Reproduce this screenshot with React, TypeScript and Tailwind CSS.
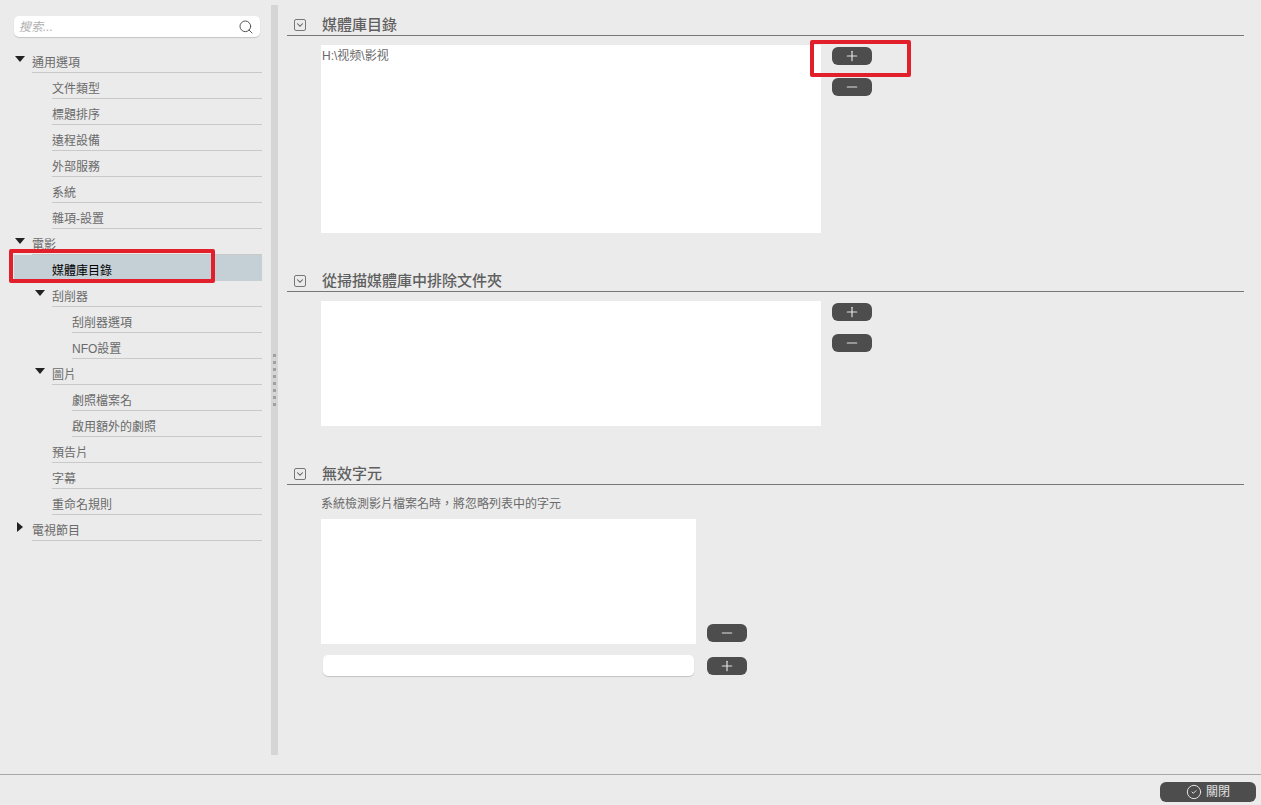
import { ChevronDown, CircleCheck, Minus, Plus, Search } from "lucide-react";
import type { ReactNode } from "react";

interface TreeItem {
  label: string;
  level: number;
  caret?: "down" | "right";
  selected?: boolean;
}

const tree: TreeItem[] = [
  { label: "通用選項", level: 0, caret: "down" },
  { label: "文件類型", level: 1 },
  { label: "標題排序", level: 1 },
  { label: "遠程設備", level: 1 },
  { label: "外部服務", level: 1 },
  { label: "系統", level: 1 },
  { label: "雜項-設置", level: 1 },
  { label: "電影", level: 0, caret: "down" },
  { label: "媒體庫目錄", level: 1, selected: true },
  { label: "刮削器", level: 1, caret: "down" },
  { label: "刮削器選項", level: 2 },
  { label: "NFO設置", level: 2 },
  { label: "圖片", level: 1, caret: "down" },
  { label: "劇照檔案名", level: 2 },
  { label: "啟用額外的劇照", level: 2 },
  { label: "預告片", level: 1 },
  { label: "字幕", level: 1 },
  { label: "重命名規則", level: 1 },
  { label: "電視節目", level: 0, caret: "right" },
];

const indent = ["pl-0", "pl-[20px]", "pl-[40px]"];

function TreeRow({ item }: { item: TreeItem }) {
  return (
    <div className={`flex h-[26px] ${indent[item.level]} ${item.selected ? "bg-[#c5cfd6]" : ""}`}>
      <div className="flex w-[18px] shrink-0 items-center pb-[2px]">
        {item.caret === "down" && (
          <div className="ml-[1px] h-0 w-0 border-x-[5px] border-t-[6px] border-x-transparent border-t-[#222]" />
        )}
        {item.caret === "right" && (
          <div className="ml-[3px] h-0 w-0 border-y-[5px] border-l-[6px] border-y-transparent border-l-[#222]" />
        )}
      </div>
      <div
        className={`flex-1 border-b text-[12px] leading-[32px] ${
          item.selected ? "border-transparent text-black" : "border-[#c9c9c9] text-[#6a6a6a]"
        }`}
      >
        {item.label}
      </div>
    </div>
  );
}

function IconButton({ kind }: { kind: "plus" | "minus" }) {
  return (
    <button className="flex h-[18px] w-[40px] items-center justify-center rounded-[6px] bg-[#4d4d4d] text-[#e2e2e2]">
      {kind === "plus" ? <Plus size={16} strokeWidth={1.75} /> : <Minus size={16} strokeWidth={1.75} />}
    </button>
  );
}

function SectionHeader({ title }: { title: string }) {
  return (
    <div className="flex h-[21px] items-center border-b border-[#777777] pl-[7px]">
      <div className="flex h-[12px] w-[12px] items-center justify-center rounded-[2px] border border-[#777777] text-[#555555]">
        <ChevronDown size={10} strokeWidth={2.5} />
      </div>
      <h2 className="mb-[1px] ml-[16px] text-[15px] font-medium leading-none text-[#5f5f5f]">{title}</h2>
    </div>
  );
}

function ListWithButtons({ heightClass, children }: { heightClass: string; children?: ReactNode }) {
  return (
    <div className="mt-[9px] flex pl-[34px]">
      <div className={`w-[500px] bg-white px-[1px] text-[12px] leading-[22px] text-[#6a6a6a] ${heightClass}`}>
        {children}
      </div>
      <div className="ml-[11px] mt-[2px] flex flex-col gap-[13px]">
        <IconButton kind="plus" />
        <IconButton kind="minus" />
      </div>
    </div>
  );
}

export default function App() {
  return (
    <div className='flex h-[805px] w-[1261px] flex-col overflow-hidden bg-[#ebebeb] font-["Liberation_Sans","Noto_Sans_CJK_TC",sans-serif]'>
      <div className="flex h-[774px]">
        {/* Sidebar */}
        <aside className="w-[271px] shrink-0 pl-[14px] pr-[9px] pt-[16px]">
          <div className="flex h-[21px] w-[246px] items-center rounded-[5px] bg-white pl-[5px] pr-[6px] shadow-[0_1px_1px_#c4c4c4]">
            <input
              placeholder="搜索..."
              className="min-w-0 flex-1 bg-transparent text-[12px] italic outline-none placeholder:text-[#b0b0b0]"
            />
            <Search size={16} strokeWidth={1.5} className="text-[#555555]" />
          </div>
          <div className="mt-[10px]">
            {tree.map((item) => (
              <TreeRow key={item.label} item={item} />
            ))}
          </div>
        </aside>

        {/* Splitter */}
        <div className="mt-[5px] flex h-[750px] w-[7px] shrink-0 flex-col items-center justify-center gap-[4px] bg-[#d5d5d5]">
          {[0, 1, 2, 3, 4, 5, 6, 7].map((i) => (
            <div key={i} className="h-[3px] w-[3px] bg-[#a0a0a0]" />
          ))}
        </div>

        {/* Settings */}
        <main className="flex-1 pl-[9px] pr-[17px] pt-[15px]">
          <section>
            <SectionHeader title="媒體庫目錄" />
            <ListWithButtons heightClass="h-[188px]">{"H:\\视频\\影视"}</ListWithButtons>
          </section>

          <section className="mt-[38px]">
            <SectionHeader title="從掃描媒體庫中排除文件夾" />
            <ListWithButtons heightClass="h-[125px]" />
          </section>

          <section className="mt-[38px]">
            <SectionHeader title="無效字元" />
            <p className="pl-[34px] pt-[11px] text-[12px] leading-[16px] text-[#6a6a6a]">
              系統檢測影片檔案名時，將忽略列表中的字元
            </p>
            <div className="mt-[7px] flex items-end pl-[34px]">
              <div className="h-[125px] w-[375px] bg-white" />
              <div className="mb-[2px] ml-[11px]">
                <IconButton kind="minus" />
              </div>
            </div>
            <div className="mt-[11px] flex items-center pl-[36px]">
              <input className="h-[21px] w-[371px] rounded-[5px] bg-white shadow-[0_1px_1px_#c4c4c4] outline-none" />
              <div className="ml-[13px]">
                <IconButton kind="plus" />
              </div>
            </div>
          </section>
        </main>
      </div>

      {/* Footer */}
      <footer className="flex h-[31px] justify-end border-t border-[#a8a8a8] pr-[5px] pt-[7px]">
        <button className="flex h-[20px] w-[96px] items-center justify-center gap-[4px] rounded-[6px] bg-[#4d4d4d] text-[12px] text-[#e2e2e2]">
          <CircleCheck size={16} strokeWidth={1.5} />
          關閉
        </button>
      </footer>

      {/* Red annotation boxes drawn over the screenshot */}
      <div className="absolute left-[9px] top-[249px] h-[34px] w-[206px] rounded-[2px] border-[4px] border-[#e2202c]" />
      <div className="absolute left-[810px] top-[40px] h-[37px] w-[101px] rounded-[2px] border-[4px] border-[#e2202c]" />
    </div>
  );
}
